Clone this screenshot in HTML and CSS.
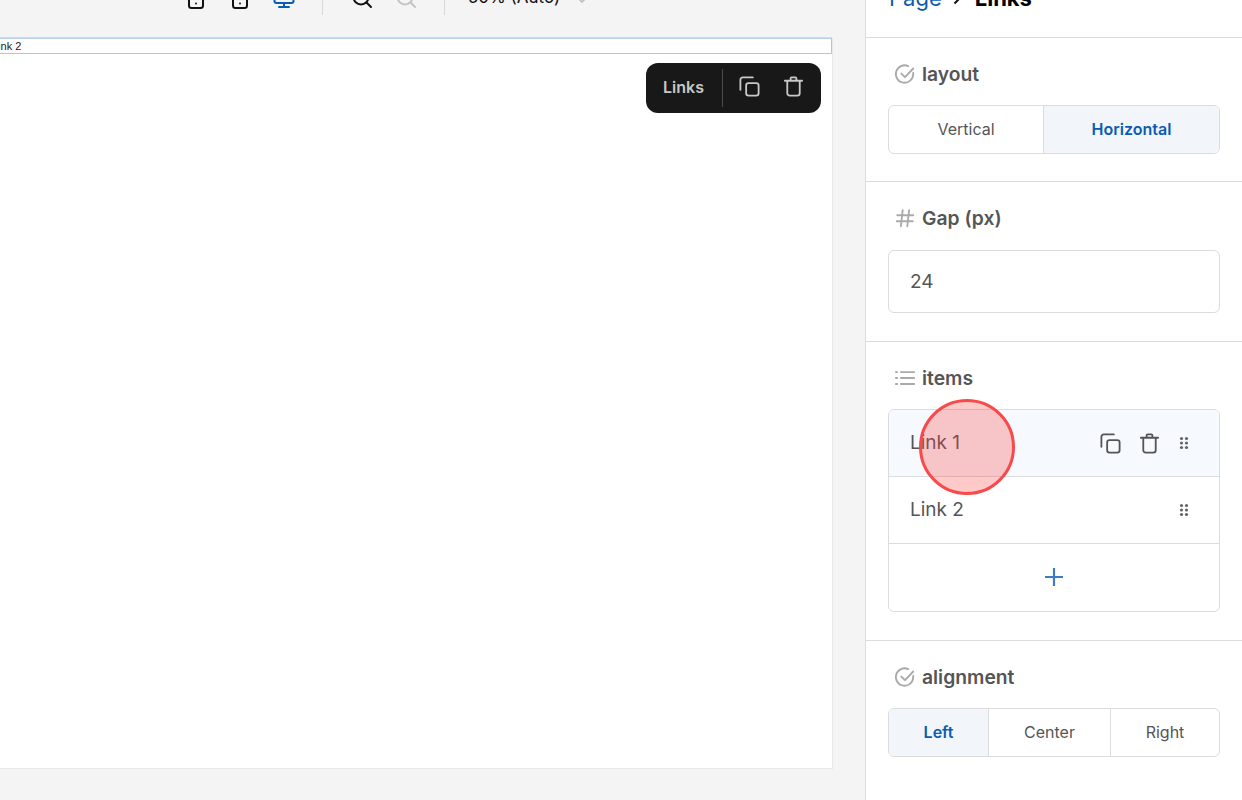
FILE: index.html
```html
<!DOCTYPE html>
<html lang="en">
<head>
    <meta charset="UTF-8">
    <title>Links - Page editor</title>
    <link rel="stylesheet" href="styles.css">
</head>
<body>
    <div class="editor">
        <!-- canvas side -->
        <main class="workspace">
            <div class="toolbar">
                <svg class="tool-icon tool-device" viewBox="0 0 20 24"><rect x="3" y="2" width="14" height="20" rx="2.5"/><circle class="dot" cx="10" cy="17.5" r="1"/></svg>
                <svg class="tool-icon tool-device" viewBox="0 0 20 24"><rect x="3" y="2" width="14" height="20" rx="2.5"/><circle class="dot" cx="10" cy="17.5" r="1"/></svg>
                <svg class="tool-icon tool-desktop" viewBox="0 0 24 24"><rect x="2.5" y="4" width="19" height="13" rx="2"/><path d="M12 17v4M7 21h10"/></svg>
                <span class="tool-sep"></span>
                <svg class="tool-icon tool-zoom" viewBox="0 0 24 24"><circle cx="11" cy="11" r="7.5"/><path d="M16.5 16.5 21 21"/></svg>
                <svg class="tool-icon tool-zoom tool-off" viewBox="0 0 24 24"><circle cx="11" cy="11" r="7.5"/><path d="M16.5 16.5 21 21M8 11h6"/></svg>
                <span class="tool-sep"></span>
                <span class="zoom-value">50% (Auto)</span>
                <svg class="zoom-caret" viewBox="0 0 12 12"><path d="M2 4l4 4 4-4"/></svg>
            </div>

            <div class="canvas">
                <div class="selected-block">Link 2</div>
                <div class="float-bar">
                    <span class="float-name">Links</span>
                    <span class="float-sep"></span>
                    <svg class="icon float-icon" viewBox="0 0 24 24"><rect x="8.5" y="8.5" width="13" height="13" rx="2.5"/><path d="M15.5 2.5H5A2.5 2.5 0 0 0 2.5 5v10.5"/></svg>
                    <svg class="icon float-icon" viewBox="0 0 24 24"><path d="M3 6h18M9 6V3.5a1 1 0 0 1 1-1h4a1 1 0 0 1 1 1V6M5.5 6v13a2.5 2.5 0 0 0 2.5 2.5h8a2.5 2.5 0 0 0 2.5-2.5V6"/></svg>
                </div>
            </div>
        </main>

        <!-- properties side -->
        <aside class="panel">
            <div class="crumbs">
                <span class="crumb-link">Page</span>
                <svg class="crumb-arrow" viewBox="0 0 12 12"><path d="M3.5 1.5 8 6l-4.5 4.5"/></svg>
                <span class="crumb-current">Links</span>
            </div>

            <section class="group group-layout">
                <h3 class="group-title">
                    <svg class="title-icon" viewBox="0 0 24 24"><path d="M21 10.5V12a9.5 9.5 0 1 1-5.5-8.6"/><path d="M8 11.5l4 4 9-9.5"/></svg>
                    layout
                </h3>
                <div class="segment seg-two">
                    <div class="seg-item">Vertical</div>
                    <div class="seg-item is-active">Horizontal</div>
                </div>
            </section>

            <section class="group group-gap">
                <h3 class="group-title">
                    <svg class="title-icon" viewBox="0 0 24 24"><path d="M9.5 3.5 7.5 21M16.5 3.5l-2 17.5M3.5 9H21M3 15.5h17.5"/></svg>
                    Gap (px)
                </h3>
                <div class="text-input">24</div>
            </section>

            <section class="group group-items">
                <h3 class="group-title">
                    <svg class="title-icon" viewBox="0 0 24 24"><path d="M7.5 5.5H22M7.5 12H22M7.5 18.5H22M2 5.5h1.5M2 12h1.5M2 18.5h1.5"/></svg>
                    items
                </h3>
                <div class="item-list">
                    <div class="item-row is-hover">
                        <span class="item-name">Link 1</span>
                        <svg class="icon item-icon" viewBox="0 0 24 24"><rect x="8.5" y="8.5" width="13" height="13" rx="2.5"/><path d="M15.5 2.5H5A2.5 2.5 0 0 0 2.5 5v10.5"/></svg>
                        <svg class="icon item-icon" viewBox="0 0 24 24"><path d="M3 6h18M9 6V3.5a1 1 0 0 1 1-1h4a1 1 0 0 1 1 1V6M5.5 6v13a2.5 2.5 0 0 0 2.5 2.5h8a2.5 2.5 0 0 0 2.5-2.5V6"/></svg>
                        <svg class="grip" viewBox="0 0 10 14"><circle cx="2.5" cy="2.5" r="1.6"/><circle cx="7.5" cy="2.5" r="1.6"/><circle cx="2.5" cy="7" r="1.6"/><circle cx="7.5" cy="7" r="1.6"/><circle cx="2.5" cy="11.5" r="1.6"/><circle cx="7.5" cy="11.5" r="1.6"/></svg>
                    </div>
                    <div class="item-row">
                        <span class="item-name">Link 2</span>
                        <svg class="grip" viewBox="0 0 10 14"><circle cx="2.5" cy="2.5" r="1.6"/><circle cx="7.5" cy="2.5" r="1.6"/><circle cx="2.5" cy="7" r="1.6"/><circle cx="7.5" cy="7" r="1.6"/><circle cx="2.5" cy="11.5" r="1.6"/><circle cx="7.5" cy="11.5" r="1.6"/></svg>
                    </div>
                    <div class="item-add">
                        <svg class="add-icon" viewBox="0 0 20 20"><path d="M10 1v18M1 10h18"/></svg>
                    </div>
                </div>
            </section>

            <section class="group group-align">
                <h3 class="group-title">
                    <svg class="title-icon" viewBox="0 0 24 24"><path d="M21 10.5V12a9.5 9.5 0 1 1-5.5-8.6"/><path d="M8 11.5l4 4 9-9.5"/></svg>
                    alignment
                </h3>
                <div class="segment seg-three">
                    <div class="seg-item is-active">Left</div>
                    <div class="seg-item">Center</div>
                    <div class="seg-item">Right</div>
                </div>
            </section>

            <!-- click marker from the recording -->
            <div class="click-marker"></div>
        </aside>
    </div>
</body>
</html>
```

FILE: styles.css
```css
:root {
    --blue: #0a5cb0;
    --line: #dcdcdc;
    --text: #555;
    --workspace-bg: #f4f4f4;
}

* {
    box-sizing: border-box;
}

html, body {
    margin: 0;
    height: 100%;
    overflow: hidden;
}

body {
    font-family: Inter, "Liberation Sans", sans-serif;
    color: var(--text);
    background: white;
}

.editor {
    display: flex;
    height: 800px;
    width: 1242px;
}

/* canvas side */
.workspace {
    width: 866px;
    flex: none;
    background: var(--workspace-bg);
    border-right: 1px solid var(--line);
    overflow: hidden;
}

.toolbar {
    height: 38px;
    display: flex;
    align-items: flex-end;
    padding: 0 0 28px 184px;
}

.tool-icon {
    flex: none;
    fill: none;
    stroke: #111;
    stroke-width: 2;
    stroke-linecap: round;
    stroke-linejoin: round;
    width: 24px;
    height: 24px;
}

.tool-device {
    margin-right: 20px;
}

.tool-desktop {
    stroke: var(--blue);
}

.tool-desktop + .tool-sep {
    margin-left: 26px;
}

.dot {
    fill: #111;
    stroke: none;
}

.tool-sep {
    flex: none;
    width: 1px;
    height: 30px;
    background: #d8d8d8;
    margin-bottom: -5px;
}

.tool-zoom {
    margin-left: 27px;
}

.tool-off {
    stroke: #c4c4c4;
    margin-left: 20px;
    margin-right: 26px;
}

.zoom-value {
    margin-left: 23px;
    margin-bottom: 3px;
    font-size: 17px;
    line-height: 20px;
    color: #111;
    white-space: nowrap;
}

.zoom-caret {
    flex: none;
    width: 12px;
    height: 12px;
    margin-left: 16px;
    margin-bottom: 4px;
    fill: none;
    stroke: #bbb;
    stroke-width: 1.5;
}

.canvas {
    position: relative;
    width: 833px;
    height: 731px;
    background: white;
    border-right: 1px solid #e8e8e8;
    border-bottom: 1px solid #e8e8e8;
}

.selected-block {
    height: 16px;
    border: 1px solid #a8c8ec;
    border-top-color: #b8cfea;
    border-left: 0;
    box-shadow: 0 -1px 0 #d0dcec;
    font-family: "Liberation Sans", sans-serif;
    font-size: 11px;
    line-height: 14px;
    color: #222;
    text-indent: -8px;
    overflow: hidden;
}

.float-bar {
    position: absolute;
    top: 25px;
    right: 11px;
    height: 50px;
    width: 175px;
    display: flex;
    align-items: center;
    background: #181818;
    border-radius: 12px;
    padding-left: 17px;
    color: #ccc;
}

.float-name {
    flex: none;
    margin-top: -2px;
    font-size: 16px;
    font-weight: 600;
    line-height: 20px;
    color: #c8c8c8;
}

.float-sep {
    flex: none;
    width: 1px;
    height: 38px;
    background: #4a4a4a;
    margin: 0 15px 0 18px;
}

.icon {
    flex: none;
    fill: none;
    stroke-width: 1.9;
    stroke-linecap: round;
    stroke-linejoin: round;
}

.float-icon {
    width: 23px;
    height: 23px;
    margin-top: -3px;
    stroke: #c8c8c8;
    margin-right: 21px;
}

/* properties side */
.panel {
    position: relative;
    flex: 1;
    min-width: 0;
}

.crumbs {
    height: 38px;
    display: flex;
    align-items: flex-end;
    padding: 0 0 27px 23px;
    border-bottom: 1px solid var(--line);
    font-size: 22px;
    line-height: 24px;
}

.crumb-link {
    color: var(--blue);
}

.crumb-arrow {
    width: 12px;
    height: 12px;
    margin: 0 12px 5px 9px;
    fill: none;
    stroke: #111;
    stroke-width: 2;
}

.crumb-current {
    font-weight: 700;
    color: #000;
}

.group {
    padding: 24px 22px 0;
    border-bottom: 1px solid var(--line);
}

.group-layout {
    height: 144px;
}

.group-gap {
    height: 160px;
}

.group-items {
    height: 299px;
}

.group-align {
    border-bottom: 0;
}

.group-title {
    margin: 0 0 19px;
    display: flex;
    align-items: center;
    gap: 6px;
    font-size: 19.3px;
    line-height: 24px;
    font-weight: 600;
    color: #555;
    padding-left: 6px;
}

.group-gap .group-title {
    margin-bottom: 20px;
}

.title-icon {
    width: 22px;
    height: 22px;
    flex: none;
    fill: none;
    stroke: #aaa;
    stroke-width: 2;
    stroke-linecap: round;
    stroke-linejoin: round;
}

.segment {
    display: grid;
    height: 49px;
    border: 1px solid var(--line);
    border-radius: 6px;
    overflow: hidden;
    font-size: 16px;
}

.seg-two {
    grid-template-columns: 154px 1fr;
}

.seg-three {
    grid-template-columns: 99px 122px 1fr;
}

.seg-item {
    display: flex;
    align-items: center;
    justify-content: center;
    padding-bottom: 2px;
}

.seg-item + .seg-item {
    border-left: 1px solid var(--line);
}

.seg-item.is-active {
    background: #f2f5fa;
    color: var(--blue);
    font-weight: 600;
}

.text-input {
    height: 63px;
    border: 1px solid var(--line);
    border-radius: 6px;
    padding-left: 21px;
    font-size: 19px;
    line-height: 61px;
}

.item-list {
    border: 1px solid var(--line);
    border-radius: 6px;
    overflow: hidden;
}

.item-row {
    height: 67px;
    display: flex;
    align-items: center;
    padding: 0 30px 0 21px;
    border-bottom: 1px solid var(--line);
}

.item-row.is-hover {
    background: #f6f9fe;
}

.item-name {
    flex: 1;
    font-size: 19px;
    line-height: 24px;
    margin-top: -1px;
}

.item-icon {
    width: 23px;
    height: 23px;
    stroke: #555;
    margin-right: 16px;
}

.item-icon + .item-icon {
    margin-right: 18px;
}

.grip {
    flex: none;
    width: 10px;
    height: 14px;
    fill: #666;
}

.item-add {
    height: 67px;
    display: flex;
    align-items: center;
    justify-content: center;
    padding-bottom: 1px;
}

.add-icon {
    width: 20px;
    height: 20px;
    fill: none;
    stroke: #3b7cc4;
    stroke-width: 2.2;
}

.click-marker {
    position: absolute;
    left: 53px;
    top: 399px;
    width: 96px;
    height: 96px;
    border: 3px solid #f84a4a;
    border-radius: 50%;
    background: rgba(250, 60, 60, 0.28);
}
```
